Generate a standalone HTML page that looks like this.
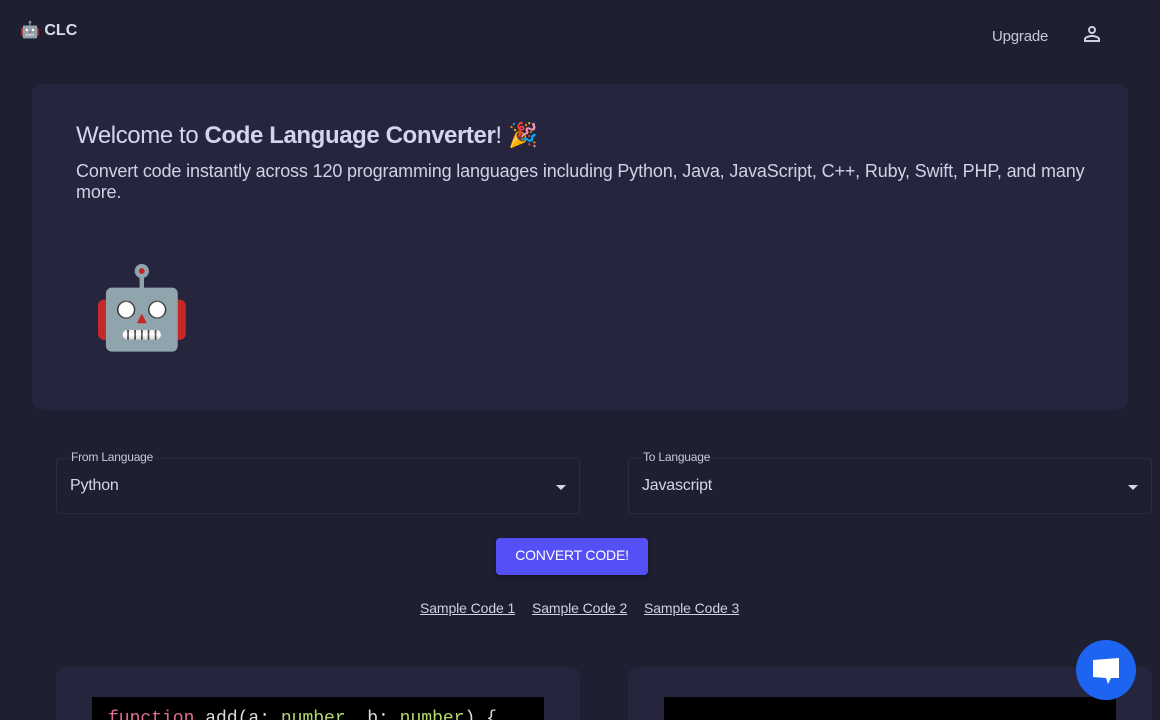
<!DOCTYPE html>
<html><head><meta charset="utf-8"><style>
*{box-sizing:border-box;margin:0;padding:0}
html,body{width:1160px;height:720px;overflow:hidden}
body{background:#1f1f32;font-family:"Liberation Sans",sans-serif;color:#d4d4e8;position:relative}
.abs{position:absolute}
.card{background:#25263d;border-radius:10px}
.sel{border:1px solid #2a2b40;border-radius:4px;height:56px}
.lbl{font-size:12px;color:#c8c8da;position:absolute;top:-9px;left:13px;background:#1f1f32;padding:0 1px;letter-spacing:-0.2px}
.val{position:absolute;left:13px;top:18px;font-size:16px;color:#d6d6e6;letter-spacing:-0.2px}
.arr{position:absolute;right:13px;top:26px;width:0;height:0;border-left:5px solid transparent;border-right:5px solid transparent;border-top:5px solid #d6d6e6}
a{color:#d0d0e4;font-size:14px;text-decoration:underline;letter-spacing:-0.1px}
</style></head><body>
<div class="abs" style="left:20px;top:20px;font-size:16px;font-weight:bold;color:#dcdcea">🤖 CLC</div>
<div class="abs" style="left:992px;top:28px;font-size:15px;color:#c8c8dc;letter-spacing:-0.2px">Upgrade</div>
<svg class="abs" style="left:1080px;top:22px" width="24" height="24" viewBox="0 0 24 24"><path fill="#d0d0e4" d="M12 6a2 2 0 1 1 0 4 2 2 0 0 1 0-4m0 9c2.7 0 5.8 1.3 6 2v1H6v-1c.2-.7 3.3-2 6-2m0-11a4 4 0 1 0 0 8 4 4 0 0 0 0-8zm0 9c-2.7 0-8 1.3-8 4v3h16v-3c0-2.7-5.3-4-8-4z"/></svg>
<div class="abs card" style="left:32px;top:84px;width:1096px;height:326px"></div>
<div class="abs" style="left:76px;top:121px;font-size:24px;color:#d4d4ec;letter-spacing:-0.4px;white-space:nowrap">Welcome to <b>Code Language Converter</b>! 🎉</div>
<div class="abs" style="left:76px;top:161px;width:1030px;font-size:18px;line-height:21px;color:#d0d0e6;letter-spacing:-0.15px">Convert code instantly across 120 programming languages including Python, Java, JavaScript, C++, Ruby, Swift, PHP, and many more.</div>
<div class="abs" style="left:92px;top:258px;font-size:80px;line-height:100px">🤖</div>
<div class="abs sel" style="left:56px;top:458px;width:524px"><span class="lbl">From Language</span><span class="val">Python</span><span class="arr"></span></div>
<div class="abs sel" style="left:628px;top:458px;width:524px"><span class="lbl">To Language</span><span class="val">Javascript</span><span class="arr"></span></div>
<div class="abs" style="left:496px;top:538px;width:152px;height:37px;background:#5450f5;border-radius:4px;box-shadow:0 2px 4px rgba(0,0,0,.4);color:#fff;font-size:14px;text-align:center;line-height:35px;letter-spacing:-0.2px">CONVERT CODE!</div>
<div class="abs" style="left:420px;top:600px"><a>Sample Code 1</a></div>
<div class="abs" style="left:532px;top:600px"><a>Sample Code 2</a></div>
<div class="abs" style="left:644px;top:600px"><a>Sample Code 3</a></div>
<div class="abs card" style="left:56px;top:667px;width:524px;height:80px"></div>
<div class="abs card" style="left:628px;top:667px;width:524px;height:80px"></div>
<div class="abs" style="left:92px;top:697px;width:452px;height:40px;background:#000;font-family:'Liberation Mono',monospace;font-size:18px;padding:12px 0 0 16px;white-space:pre;color:#ddd;overflow:hidden"><span style="color:#e06c9a">function</span> add(a: <span style="color:#b5d86a">number</span>, b: <span style="color:#b5d86a">number</span>) {</div>
<div class="abs" style="left:664px;top:697px;width:452px;height:40px;background:#000"></div>
<div class="abs" style="left:1076px;top:640px;width:60px;height:60px;border-radius:50%;background:#1d64f0"></div>
<svg class="abs" style="left:1090px;top:656px" width="32" height="30" viewBox="0 0 32 30"><path fill="#fff" d="M3 4 L29 2 L29 22 L21 22 L18 28 L16 22 L3 21 Z"/></svg>
</body></html>
